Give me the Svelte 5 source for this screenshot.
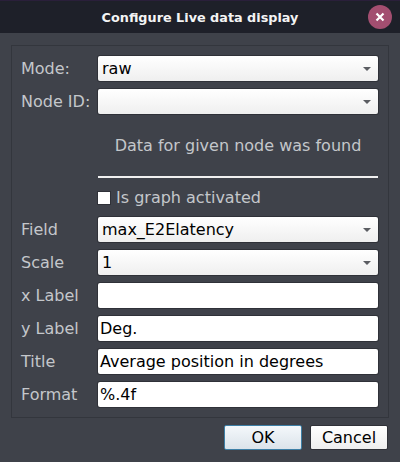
<script lang="ts">
	const upperFields = [
		{ label: 'Mode:', value: 'raw' },
		{ label: 'Node ID:', value: '' }
	];
	const lowerCombos = [
		{ label: 'Field', value: 'max_E2Elatency' },
		{ label: 'Scale', value: '1' }
	];
	const inputs = [
		{ label: 'x Label', value: '' },
		{ label: 'y Label', value: 'Deg.' },
		{ label: 'Title', value: 'Average position in degrees' },
		{ label: 'Format', value: '%.4f' }
	];
</script>

{#snippet combo(label: string, value: string)}
	<span class="label">{label}</span>
	<div class="combo">
		<span>{value}</span>
		<i class="arrow"></i>
	</div>
{/snippet}

<div class="dialog">
	<header class="titlebar">
		<span class="title">Configure Live data display</span>
		<span class="close">
			<svg width="10" height="10" viewBox="0 0 10 10">
				<path d="M1.5 1.5 L8.5 8.5 M8.5 1.5 L1.5 8.5" stroke="#fff" stroke-width="2.2" />
			</svg>
		</span>
	</header>

	<div class="body">
		<section class="frame">
			{#each upperFields as f (f.label)}
				{@render combo(f.label, f.value)}
			{/each}

			<p class="status">Data for given node was found</p>
			<hr class="rule" />

			<label class="check">
				<span class="box"></span>
				<span>Is graph activated</span>
			</label>

			{#each lowerCombos as f (f.label)}
				{@render combo(f.label, f.value)}
			{/each}

			{#each inputs as f (f.label)}
				<span class="label">{f.label}</span>
				<div class="input">{f.value}</div>
			{/each}
		</section>

		<footer class="buttons">
			<button class="btn default">OK</button>
			<button class="btn">Cancel</button>
		</footer>
	</div>
</div>

<style>
	:global(body) {
		margin: 0;
		background: #3f424a;
	}

	.dialog {
		width: 400px;
		height: 462px;
		display: flex;
		flex-direction: column;
		background: #3f424a;
		font-family: 'DejaVu Sans', sans-serif;
		font-size: 16px;
	}

	.titlebar {
		height: 33px;
		flex: none;
		position: relative;
		display: flex;
		align-items: center;
		justify-content: center;
		background: #1e2029;
		border-top: 1px solid #2a1f3a;
		box-sizing: border-box;
	}

	.title {
		color: #f4f4f4;
		font-size: 12.8px;
		font-weight: 700;
	}

	.close {
		position: absolute;
		right: 8px;
		top: 4px;
		width: 24px;
		height: 24px;
		border-radius: 50%;
		background: #a34e70;
		display: flex;
		align-items: center;
		justify-content: center;
	}

	.body {
		padding: 12px 11px 0;
	}

	.frame {
		display: grid;
		grid-template-columns: 77px 280px;
		row-gap: 8px;
		align-items: center;
		align-content: start;
		box-sizing: border-box;
		height: 373px;
		padding: 10px 10px 9px 9px;
		border: 1px solid #33363d;
	}

	.label {
		color: #c4c7cb;
		padding-bottom: 1px;
		white-space: nowrap;
	}

	.combo,
	.input {
		height: 25px;
		box-sizing: border-box;
		border-radius: 2px;
		color: #000;
		line-height: 25px;
		box-shadow: 0 0 0 1px #2f3138;
	}

	.combo {
		grid-column: 2;
		display: flex;
		align-items: center;
		justify-content: space-between;
		padding: 0 7px 0 4px;
		background: linear-gradient(#ffffff, #efefef);
	}

	.input {
		grid-column: 2;
		padding-left: 2px;
		background: #fff;
	}

	.arrow {
		width: 0;
		height: 0;
		border-left: 4px solid transparent;
		border-right: 4px solid transparent;
		border-top: 4px solid #5b5d62;
	}

	.status {
		grid-column: 2;
		margin: 0;
		height: 46px;
		display: flex;
		align-items: center;
		justify-content: center;
		color: #c4c7cb;
	}

	.rule {
		grid-column: 2;
		width: 100%;
		margin: 0;
		border: none;
		border-top: 2px solid #f0f0f0;
	}

	.check {
		grid-column: 2;
		display: flex;
		align-items: center;
		gap: 6px;
		height: 23px;
		color: #c4c7cb;
	}

	.box {
		width: 12px;
		height: 12px;
		background: #fff;
		border: 0;
		box-shadow: 0 0 0 1px #2f3138;
	}

	.buttons {
		display: flex;
		justify-content: flex-end;
		gap: 8px;
		padding: 7px 1px 0 0;
	}

	.btn {
		width: 78px;
		height: 25px;
		padding: 0;
		font: inherit;
		color: #000;
		border: 1px solid #2f3138;
		border-radius: 2px;
		background: linear-gradient(#ffffff, #eeeeee);
	}

	.btn.default {
		border-color: #3d7fa6;
		background: linear-gradient(#f4f8fb, #dbe3ea);
	}
</style>
